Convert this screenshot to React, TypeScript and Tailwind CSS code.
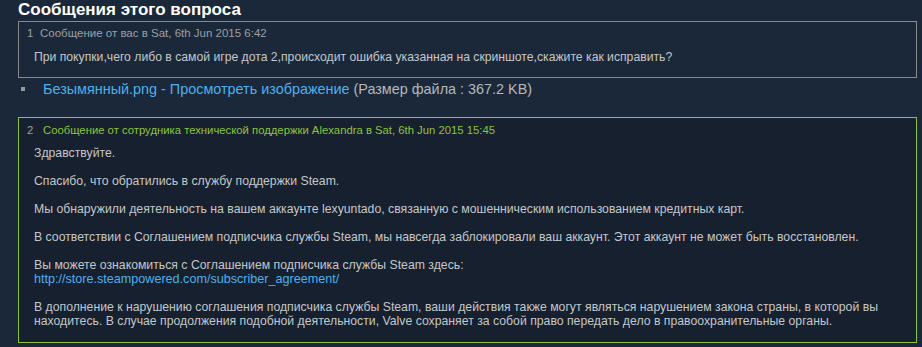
import React from 'react';

const paragraphs: React.ReactNode[] = [
    'Здравствуйте.',
    'Спасибо, что обратились в службу поддержки Steam.',
    'Мы обнаружили деятельность на вашем аккаунте lexyuntado, связанную с мошенническим использованием кредитных карт.',
    'В соответствии с Соглашением подписчика службы Steam, мы навсегда заблокировали ваш аккаунт. Этот аккаунт не может быть восстановлен.',
    <>
        Вы можете ознакомиться с Соглашением подписчика службы Steam здесь:
        <br />
        <a href="#" className="text-[12.6px] text-[#4fb0ec]">http://store.steampowered.com/subscriber_agreement/</a>
    </>,
    <>
        В дополнение к нарушению соглашения подписчика службы Steam, ваши действия также могут являться нарушением закона страны, в которой вы
        <br />
        находитесь. В случае продолжения подобной деятельности, Valve сохраняет за собой право передать дело в правоохранительные органы.
    </>,
];

const App: React.FC = () => {
    return (
        <div className="w-full h-[347px] overflow-hidden bg-[#1b2839] pl-[18px] pr-[5px] font-['Liberation_Sans',Arial,sans-serif]">
            <h2 className="text-[17px] leading-[20px] font-bold text-white">Сообщения этого вопроса</h2>

            {/* message 1 */}
            <div className="mt-px border border-[#8a8a8a] pt-[4px] pb-[12px]">
                <div className="flex text-[11.5px] leading-[14px] text-[#9aa0a6]">
                    <span className="w-[21px] pl-[8px]">1</span>
                    <span>Сообщение от вас в Sat, 6th Jun 2015 6:42</span>
                </div>
                <p className="mt-[9px] pl-[15px] text-[12.2px] leading-[16px] text-[#c4c7ca]">
                    При покупки,чего либо в самой игре дота 2,происходит ошибка указанная на скриншоте,скажите как исправить?
                </p>
            </div>

            {/* attachment */}
            <div className="flex items-center h-[20px] mt-[1px] text-[14.4px] leading-[20px]">
                <span className="ml-[3px] w-[4px] h-[4px] bg-[#9a9a9a]"></span>
                <span className="ml-[18px] text-[#4fb0ec]">Безымянный.png - Просмотреть изображение</span>
                <span className="ml-[4px] text-[#b4b8bc]">(Размер файла : 367.2 KB)</span>
            </div>

            {/* message 2 */}
            <div className="mt-[18px] border border-[#8cc43c] bg-[#16202e] pt-[5px] pb-[14px]">
                <div className="flex text-[11.3px] leading-[14px]">
                    <span className="w-[24px] pl-[8px] text-[#9aa0a6]">2</span>
                    <span className="text-[#8cc43c]">Сообщение от сотрудника технической поддержки Alexandra в Sat, 6th Jun 2015 15:45</span>
                </div>
                <div className="mt-[9px] pl-[15px] flex flex-col gap-[14px] text-[12.25px] leading-[14px] text-[#c4c7ca]">
                    {paragraphs.map((p, i) => (
                        <p key={i}>{p}</p>
                    ))}
                </div>
            </div>
        </div>
    );
};

export default App;
